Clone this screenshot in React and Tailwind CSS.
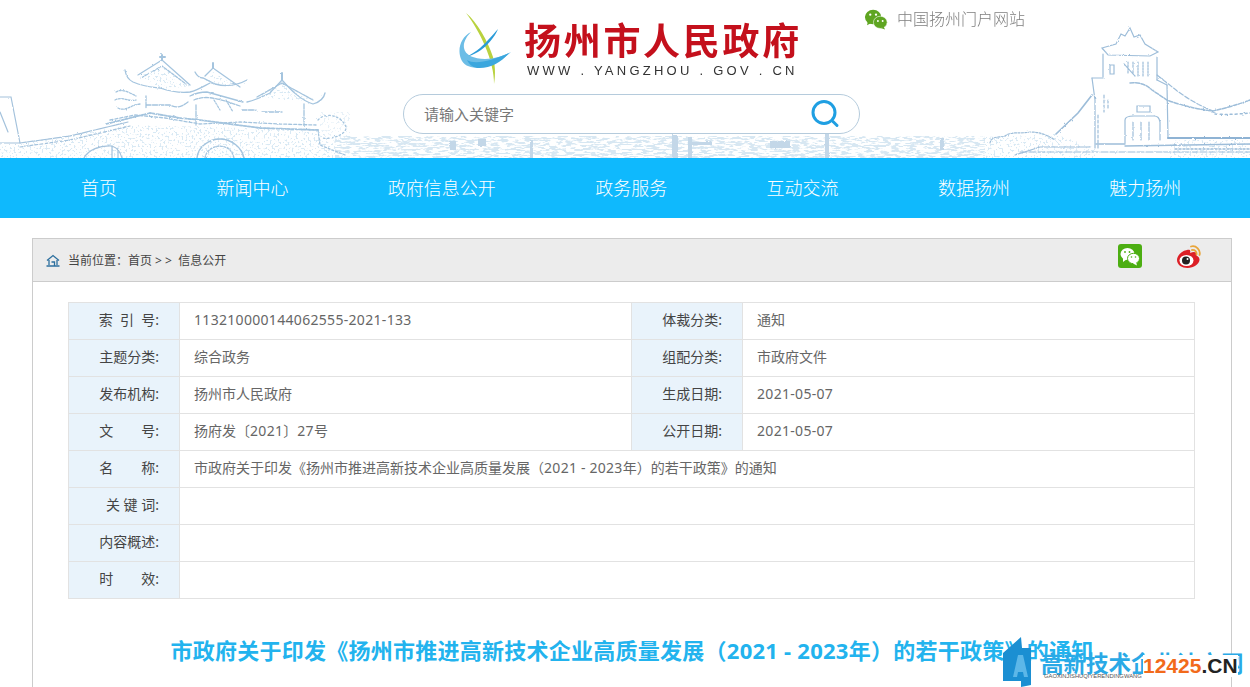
const FONT = { fontFamily: '"Noto Sans", "Noto Sans CJK SC", sans-serif' };

function Banner() {
  return (
    <svg className="absolute left-0 top-0" width="1250" height="158" viewBox="0 0 1250 158" fill="none">
      <defs>
        <filter id="rough" x="-5%" y="-5%" width="110%" height="110%">
          <feTurbulence type="fractalNoise" baseFrequency="0.35" numOctaves="2" seed="7" result="n" />
          <feDisplacementMap in="SourceGraphic" in2="n" scale="2.2" />
        </filter>
        <filter id="stipple" x="0" y="0" width="100%" height="100%">
          <feTurbulence type="fractalNoise" baseFrequency="0.5" numOctaves="2" seed="3" result="n" />
          <feColorMatrix in="n" type="matrix" values="0 0 0 0 0.69  0 0 0 0 0.81  0 0 0 0 0.9  0 0 0 10 -5.6" />
          <feComposite in2="SourceAlpha" operator="in" />
        </filter>
        <filter id="streak" x="0" y="0" width="100%" height="100%">
          <feTurbulence type="fractalNoise" baseFrequency="0.12 0.55" numOctaves="3" seed="11" result="n" />
          <feColorMatrix in="n" type="matrix" values="0 0 0 0 0.68  0 0 0 0 0.8  0 0 0 0 0.89  0 0 0 9 -4.2" />
          <feComposite in2="SourceAlpha" operator="in" />
        </filter>
      </defs>

      {/* stippled masses */}
      <g fill="#000" filter="url(#stipple)">
        <path d="M0 147L130 125L320 130L345 158H0Z" />
        <path d="M140 76L163 67L190 86L160 90ZM204 80L213 72L238 87L215 84ZM258 96L282 84L312 101L285 100Z" />
        <path d="M320 112H350V145H320Z" opacity="0.6" />
        <path d="M985 137L1055 134L1095 148V158H985Z" />
        <path d="M1170 140H1250V158H1170Z" />
      </g>
      <path d="M335 136H985V158H335Z" fill="#000" filter="url(#streak)" />
      <g fill="#c3d7e8" filter="url(#rough)">
        <path d="M450 141H456V150H450ZM478 139H486V146H478ZM530 140H533V158H530ZM672 135H678V158H672ZM688 137H692V158H688ZM690 142H712V145H690ZM770 141H790V148H770ZM940 138H944V150H940Z" />
        <path d="M825 133H829V158H825Z" />
      </g>

      <g filter="url(#rough)" strokeLinecap="round">
        {/* left tower + bridge */}
        <g stroke="#a4c2dc" strokeWidth="1.2">
          <path d="M0 97H11L20 143M0 112L8 132M0 143H20" />
          <path d="M20 143L70 136L128 122" strokeDasharray="6 1" />
          <path d="M20 147L70 140L130 126" strokeDasharray="3 2" />
          <path d="M84 158C88 150 100 145 112 146C118 148 120 152 122 158" />
          <path d="M112 146V158M118 148V158" />
        </g>
        {/* pavilions */}
        <g stroke="#a4c4de" strokeWidth="1.3">
          <path d="M125 70C126 77 129 80 133 82C145 87 152 87 160 88C172 92 182 93 190 92C198 90 204 86 210 83" />
          <path d="M138 75L162 60L190 85" />
          <path d="M141 78L162 66L186 84" strokeDasharray="3 1.5" />
          <path d="M162 60V55M160 57H165" strokeWidth="2" />
          <path d="M195 72C197 76 200 78 203 78L215 84C226 87 238 85 247 80" />
          <path d="M205 76L213 68L240 87" />
          <path d="M213 68V63" strokeWidth="2" />
          <path d="M190 96C198 92 204 92 207 92L243 102" />
          <path d="M194 100C204 96 212 96 240 106" strokeDasharray="4 1.5" />
          <path d="M247 102C256 100 264 96 270 93C274 88 278 85 282 80C290 89 300 100 313 104C320 102 324 98 325 93" />
          <path d="M257 97L282 83L313 100" strokeDasharray="3 1" />
          <path d="M282 80V73" strokeWidth="2" />
          <path d="M146 96V108M146 105H170C176 108 180 108 188 102M196 105V125M242 110H256M262 112H282M304 104V126" strokeDasharray="5 1.5" />
          <path d="M116 92C122 88 130 93 136 96M115 100C122 96 128 102 136 100M118 108C126 112 130 105 140 104M214 100L220 110M226 100L233 112" strokeDasharray="2 1.5" />
          <path d="M106 124L130 118L150 113L180 118L200 120L230 124L260 128L318 130" strokeDasharray="2.500 1.500" strokeWidth="1.800" />
          <path d="M110 120L135 115L165 118L200 124L240 122L280 124L316 125" strokeDasharray="3 2" />
          <path d="M197 158C198 146 210 139 220 139C232 139 242 148 244 158" strokeWidth="1.400" />
          <path d="M205 158C206 150 214 146 220 146C228 147 232 150 234 158" strokeDasharray="2 1.500" />
          <path d="M318 130L320 145L345 155" strokeDasharray="2 2" />
          <path d="M318 120C325 112 340 115 345 125C350 132 335 140 322 138" strokeDasharray="1.500 2.500" />
        </g>
        {/* right tower */}
        <g stroke="#9dbdd9" strokeWidth="1.200">
          <path d="M1102 48L1116 44L1121 34L1125 36L1130 28L1134 37L1140 35L1145 44L1158 52L1150 56L1108 55Z" />
          <path d="M1103 54V77M1157 57V80" />
          <path d="M1092 78H1103M1157 80L1167 85" />
          <path d="M1092 78L1095 100V148M1167 85L1168 138" />
          <path d="M1128 62V74M1133 62V74M1138 62V76M1143 62V76M1148 62V76M1124 64L1135 76" strokeDasharray="2 1" />
          <path d="M1110 65V74H1114V65Z" />
          <path d="M1125 143V120C1125 117 1130 116 1134 116H1154C1158 116 1159 118 1160 122V140" />
          <path d="M1133 122V140M1141 122V140M1149 122V140" strokeDasharray="4 1" />
          <path d="M1137 106H1150V112H1137Z" />
          <path d="M1104 95V112M1108 100V110M1098 115V148" strokeDasharray="3 2" />
          <path d="M1092 95L1078 113L1056 134" strokeWidth="1.700" />
          <path d="M1130 83C1140 82 1147 85 1152 90L1167 100C1180 105 1200 110 1213 111C1226 108 1240 104 1250 100" strokeDasharray="4 1.500" strokeWidth="1.500" />
          <path d="M1215 114C1228 115 1240 114 1250 113" strokeDasharray="2 3" strokeWidth="1.500" />
          <path d="M1157 75C1170 85 1178 92 1183 95C1193 102 1205 108 1213 111" strokeDasharray="5 2" />
          <path d="M1168 138H1250" strokeWidth="2" stroke="#8fb3d4" />
          <path d="M1096 144H1125M1125 146L1250 144" strokeWidth="1.400" />
          <path d="M1175 149H1250" strokeDasharray="2 2" strokeWidth="1.500" />
          <path d="M1020 152H1250" strokeDasharray="7 2" />
          <path d="M990 143C992 135 1000 138 1005 136C1012 131 1020 134 1030 132C1042 132 1048 136 1055 140" strokeDasharray="2 1.500" />
          <path d="M1015 155L1040 147H1090" />
        </g>
      </g>
    </svg>
  );
}

function Logo() {
  return (
    <svg width="56" height="72" viewBox="0 0 56 72" fill="none" className="shrink-0">
      <path d="M7 0C18 9 29 28 34 44C37 55 36 66 35 71C35 60 32 47 26 33C21 21 14 9 7 0Z" fill="#b9d23f" />
      <path d="M39 16C35 26 22 42 3 45C14 42 23 34 29 27C33 23 36 19 39 16Z" fill="#2a9bd8" />
      <path d="M12 19C2 24 -2 36 2 46C6 56 20 57 34 50C42 47 48 43 52 39C44 43 35 46 26 46C15 46 6 42 5 35C4 29 8 23 12 19Z" fill="#6cbde6" />
      <path d="M8 47C16 52 32 48 50 40C42 50 30 56 18 55C13 54 10 51 8 47Z" fill="#3ba7de" />
    </svg>
  );
}

function Wechat({ className }) {
  return (
    <svg className={className} viewBox="0 0 24 22" fill="#5fa521">
      <ellipse cx="9" cy="8.500" rx="8.600" ry="7.600" />
      <path d="M3.500 13L2.600 17L7 14.600Z" />
      <ellipse cx="16.500" cy="14" rx="7.200" ry="6.400" fill="#5fa521" stroke="#ffffff" strokeWidth="0.600" />
      <path d="M20 18.500L21.500 21.500L17 20Z" />
      <circle cx="6" cy="6" r="1.200" fill="#fff" />
      <circle cx="12" cy="6" r="1.200" fill="#fff" />
      <circle cx="14" cy="12.500" r="1" fill="#fff" />
      <circle cx="19" cy="12.500" r="1" fill="#fff" />
    </svg>
  );
}

const NAV = ["首页", "新闻中心", "政府信息公开", "政务服务", "互动交流", "数据扬州", "魅力扬州"];

const ROWS = [
  ["索  引  号:", "113210000144062555-2021-133", "体裁分类:", "通知"],
  ["主题分类:", "综合政务", "组配分类:", "市政府文件"],
  ["发布机构:", "扬州市人民政府", "生成日期:", "2021-05-07"],
  ["文　　号:", "扬府发〔2021〕27号", "公开日期:", "2021-05-07"],
  ["名　　称:", "市政府关于印发《扬州市推进高新技术企业高质量发展（2021 - 2023年）的若干政策》的通知"],
  ["关 键 词:", ""],
  ["内容概述:", ""],
  ["时　　效:", ""],
];

function Digits({ text }) {
  return text.split(/([0-9-]+)/).map((part, i) =>
    /^[0-9-]+$/.test(part) ? (
      <span key={i} className="tracking-[0.31px]">{part}</span>
    ) : (
      <span key={i}>{part}</span>
    )
  );
}

function Label({ children }) {
  return (
    <div className="flex w-[110px] items-center justify-end whitespace-pre bg-[#e9f3fb] pb-[4px] pr-[20px] text-[14px] text-[#444]">
      {children}
    </div>
  );
}

function Value({ children, className }) {
  return (
    <div className={`flex items-center whitespace-pre pb-[4px] pl-[14px] text-[14px] text-[#666] ${className}`}>
      <Digits text={children} />
    </div>
  );
}

export default function App() {
  return (
    <div className="relative h-[687px] w-[1250px] overflow-hidden bg-white" style={FONT}>
      <header className="relative h-[158px]">
        <Banner />
        <div className="absolute left-[459px] top-[13px]">
          <Logo />
        </div>
        <div className="absolute left-[524px] top-[15px] text-[37px] font-bold leading-[52px] tracking-[2.7px] text-[#c4101c] whitespace-nowrap">
          扬州市人民政府
        </div>
        <div className="absolute left-[527px] top-[62px] text-[13px] leading-[18px] tracking-[3.25px] text-[#333] whitespace-nowrap" style={{ fontFamily: '"Liberation Sans", sans-serif' }}>
          WWW . YANGZHOU . GOV . CN
        </div>
        <div className="absolute left-[864px] top-[9px] flex items-center gap-[9px]">
          <Wechat className="h-[21px] w-[24px]" />
          <span className="-mt-[1px] text-[16px] font-light leading-[20px] text-[#7f7f7f]">中国扬州门户网站</span>
        </div>
        <div className="absolute left-[403px] top-[94px] flex h-[40px] w-[457px] items-center justify-between rounded-full border border-[#b5cbdc] bg-white pl-[20px] pr-[19px]">
          <span className="text-[15px] text-[#777]">请输入关键字</span>
          <svg width="30" height="30" viewBox="0 0 30 30" fill="none">
            <circle cx="14" cy="13.500" r="11" stroke="#1f9fe2" strokeWidth="3" />
            <path d="M23 22.500L27 26.500" stroke="#1f9fe2" strokeWidth="3" strokeLinecap="round" />
          </svg>
        </div>
      </header>

      <nav className="flex h-[60px] items-center gap-[99.4px] bg-[#0fb9fd] pl-[81px] text-[18px] font-light text-white">
        {NAV.map((n) => (
          <span key={n} className="whitespace-nowrap">{n}</span>
        ))}
      </nav>

      <section className="mx-[32px] mt-[20px] h-[600px] w-[1200px] border-x border-t border-[#ccc]">
        <div className="flex h-[43px] items-center justify-between border-b border-[#ccc] bg-[#ececec] pl-[13px]">
          <div className="mt-[2px] flex items-center text-[12px] text-[#444]">
            <svg width="14" height="14" viewBox="0 0 14 14" fill="none" stroke="#2c6f9e" strokeWidth="1.300">
              <path d="M1 6.500L7 1.500L13 6.500M3 6V11M11 6V11M0.500 12H13.500M5.500 8H8.500V12" />
            </svg>
            <span className="ml-[8px] whitespace-pre">当前位置：首页 &gt; &gt;  信息公开</span>
          </div>
          <div className="flex items-start gap-[34px] pb-[8px] pr-[29px]">
            <div className="mt-[1px] flex h-[24px] w-[24px] items-center justify-center rounded-[3px] bg-[#4cae12]">
              <svg width="20" height="19" viewBox="0 0 20 19">
                <ellipse cx="7.500" cy="7" rx="7" ry="6" fill="#fff" />
                <path d="M3 11L3 15L7 12Z" fill="#fff" />
                <ellipse cx="13.500" cy="11.500" rx="6" ry="5.200" fill="#fff" stroke="#4cae12" strokeWidth="1" />
                <path d="M16 15L17 18.500L13 16.500Z" fill="#fff" />
                <circle cx="5" cy="5" r="0.900" fill="#4cae12" />
                <circle cx="9.500" cy="5" r="0.900" fill="#4cae12" />
                <circle cx="11.500" cy="10" r="0.800" fill="#4cae12" />
                <circle cx="15.500" cy="10" r="0.800" fill="#4cae12" />
              </svg>
            </div>
            <svg width="26" height="26" viewBox="0 0 26 26" fill="none">
              <path d="M11 7C5 8 1 13 1 17C1 22 6 25 11.500 25C18 25 23 21 23.500 17C23.800 14 21 13 20.500 12.500C21.500 9.500 19 8 14 10C15 7 13.500 6.500 11 7Z" fill="#dc2027" />
              <ellipse cx="10.500" cy="17.500" rx="7" ry="5.500" fill="#fff" />
              <circle cx="10" cy="17.500" r="4" fill="#222" />
              <circle cx="11.500" cy="16" r="1" fill="#fff" />
              <path d="M15 3.500C20 2 25 7 23.500 12M16 7C19 6.500 21 9 20.500 11.500" stroke="#e8a53a" strokeWidth="1.800" strokeLinecap="round" />
            </svg>
          </div>
        </div>

        <div className="ml-[35px] mt-[20px] w-[1127px] border-x border-t border-[#e2e2e2]">
          {ROWS.map((r) => (
            <div key={r[0]} className="flex h-[37px] border-b border-[#e2e2e2]">
              <Label>{r[0]}</Label>
              {r.length === 4 ? (
                <>
                  <Value className="w-[453px] border-x border-[#e2e2e2]">{r[1]}</Value>
                  <Label>{r[2]}</Label>
                  <Value className="flex-1 border-l border-[#e2e2e2]">{r[3]}</Value>
                </>
              ) : (
                <Value className="flex-1 border-l border-[#e2e2e2]">{r[1]}</Value>
              )}
            </div>
          ))}
        </div>

        <h1 className="mt-[34px] text-center text-[22px] font-bold leading-[34px] tracking-[0.25px] text-[#22b3ee] whitespace-nowrap">
          市政府关于印发《扬州市推进高新技术企业高质量发展（2021 - 2023年）的若干政策》的通知
        </h1>
      </section>

      {/* watermark */}
      <div className="absolute left-[1003px] top-[636px] h-[51px] w-[247px]">
        <svg className="absolute left-0 top-0" width="34" height="51" viewBox="0 0 34 51">
          <path d="M0 17L18 1L19 12H28V49L18 51V45H0Z" fill="#1b8fd2" />
          <path d="M10 41L15 19H20L25 41H21L20 36H15L14 41Z" fill="#5cb7e8" />
        </svg>
        <div className="absolute left-[38px] top-[14px] text-[22.500px] font-bold leading-[28px] text-[#2aa9e6] whitespace-nowrap">高新技术企业认定网</div>
        <div className="absolute left-[41px] top-[36px] text-[5.800px] leading-[9px] text-[#555] whitespace-nowrap" style={{ fontFamily: '"Liberation Sans", sans-serif' }}>GAOXINJISHUQIYERENDINGWANG</div>
        <div className="absolute left-[140px] top-[19px] bg-white text-[21px] font-bold leading-[22px] whitespace-nowrap" style={{ fontFamily: '"Liberation Sans", sans-serif' }}>
          <span className="text-[#f26a1b]">12425</span><span className="text-[#222]">.CN</span>
        </div>
      </div>
    </div>
  );
}
